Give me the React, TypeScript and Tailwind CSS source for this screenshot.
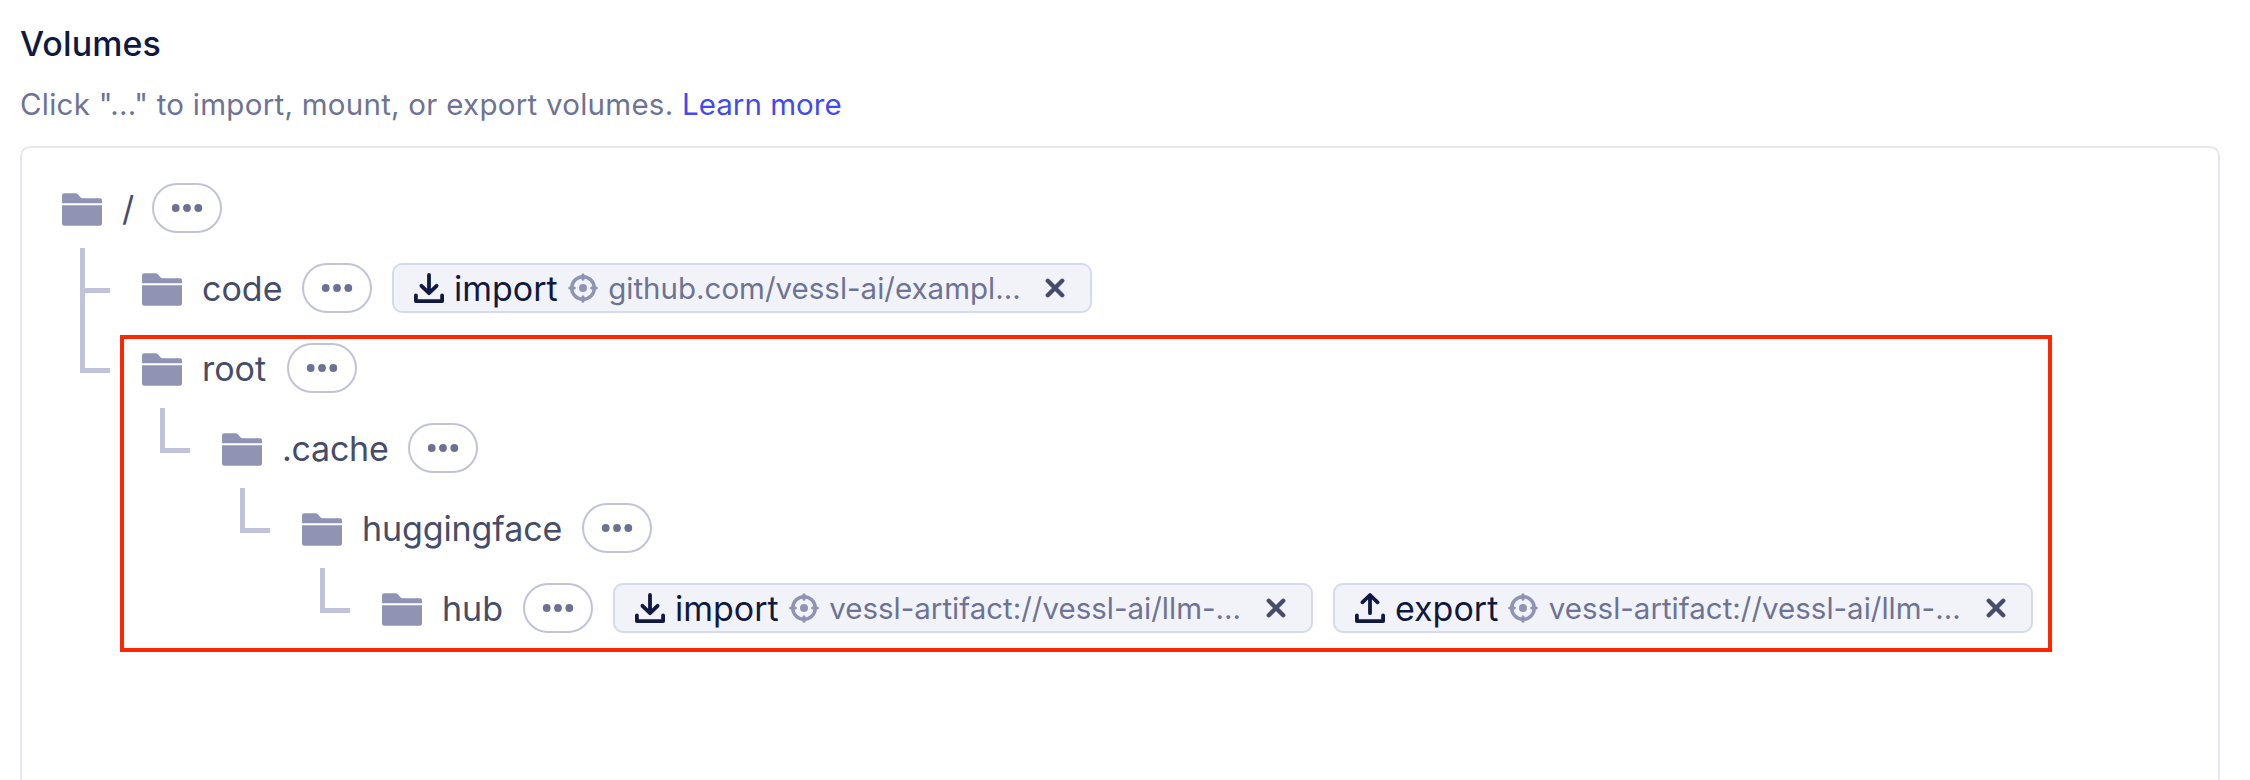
import type { ReactNode } from "react";

function FolderIcon() {
  return (
    <svg width="40" height="34" viewBox="0 0 40 34" fill="#9093b3" className="mt-[3px] shrink-0">
      <path d="M0 10.2V2.5A2.3 2.3 0 0 1 2.3.2H13.4Q14.7.2 15.6 1.1L18.2 4Q19.3 5.2 20.6 5.2H37.8A2.2 2.2 0 0 1 40 7.4V10.2Z" />
      <path d="M0 12.3H40V30.5A2.3 2.3 0 0 1 37.7 32.8H2.3A2.3 2.3 0 0 1 0 30.5Z" />
    </svg>
  );
}

function ImportIcon() {
  return (
    <svg width="30" height="30" viewBox="0 0 30 30" fill="none" stroke="#0f1942" strokeWidth="3.8" strokeLinecap="round" strokeLinejoin="round" className="shrink-0">
      <path d="M15 2V19M7.4 12.8L15 20.2L22.6 12.8" />
      <path d="M1.9 22.4V28.1H28.1V22.4" />
    </svg>
  );
}

function ExportIcon() {
  return (
    <svg width="30" height="30" viewBox="0 0 30 30" fill="none" stroke="#0f1942" strokeWidth="3.8" strokeLinecap="round" strokeLinejoin="round" className="shrink-0">
      <path d="M15 20.2V3M7.4 9.3L15 2L22.6 9.3" />
      <path d="M1.9 22.4V28.1H28.1V22.4" />
    </svg>
  );
}

function TargetIcon() {
  return (
    <svg width="30" height="30" viewBox="0 0 30 30" fill="none" stroke="#9093b3" strokeLinecap="round" className="shrink-0">
      <circle cx="15" cy="15" r="11.3" strokeWidth="3.4" />
      <circle cx="15" cy="15" r="4" fill="#9093b3" stroke="none" />
      <path strokeWidth="3" d="M15 1.7V6.3M15 23.7V28.3M1.7 15H6.3M23.7 15H28.3" />
    </svg>
  );
}

function MoreButton() {
  return (
    <button aria-label="More" className="ml-5 flex h-[50px] w-[70px] shrink-0 items-center justify-center rounded-full border-2 border-[#c0c3d9]">
      <svg width="32" height="8" viewBox="0 0 32 8" fill="#6d7193">
        <circle cx="4.7" cy="4" r="3.9" />
        <circle cx="16" cy="4" r="3.9" />
        <circle cx="27.3" cy="4" r="3.9" />
      </svg>
    </button>
  );
}

function Chip({ kind, url }: { kind: "import" | "export"; url: string }) {
  return (
    <div className="ml-5 flex h-[50px] w-[700px] shrink-0 items-center rounded-[10px] border-2 border-[#d6daed] bg-[#f2f3f9] pl-5 whitespace-nowrap">
      {kind === "import" ? <ImportIcon /> : <ExportIcon />}
      <span className="mt-0.5 ml-2.5 text-[34px] leading-[44px] text-[#0f1942]">{kind}</span>
      <span className="ml-2.5 flex">
        <TargetIcon />
      </span>
      <span className="mb-px ml-[10.5px] text-[29.5px] leading-[44px] text-[#6d7394]">{url}</span>
      <button aria-label="Remove" className="mr-[25px] ml-auto">
        <svg width="20" height="20" viewBox="0 0 20 20" stroke="#464c69" strokeWidth="4.4" strokeLinecap="round" className="block">
          <path d="M2.8 2.8L17.2 17.2M17.2 2.8L2.8 17.2" />
        </svg>
      </button>
    </div>
  );
}

function Branch({ last = true }: { last?: boolean }) {
  return (
    <div className="flex w-[30px] shrink-0 flex-col self-stretch">
      <div className={last ? "h-[45px] border-b-[5px] border-l-[5px] border-[#c0c3d9]" : "flex flex-1 border-l-[5px] border-[#c0c3d9]"}>
        {!last && <div className="mt-10 h-[5px] w-full bg-[#c0c3d9]" />}
      </div>
    </div>
  );
}

type NodeProps = { name: string; labelClass: string; chips?: ReactNode; children?: ReactNode };

function TreeNode({ name, labelClass, chips, children }: NodeProps) {
  return (
    <div className="flex flex-col">
      <div className="flex h-20 items-center">
        <FolderIcon />
        <span className={`mt-0.5 ml-5 text-[34px] leading-[50px] whitespace-nowrap text-[#464d6b] ${labelClass}`}>{name}</span>
        <MoreButton />
        {chips}
      </div>
      {children && <div className="ml-[18px] flex flex-col">{children}</div>}
    </div>
  );
}

function Child({ last = true, children }: { last?: boolean; children: ReactNode }) {
  return (
    <div className="flex gap-8">
      <Branch last={last} />
      {children}
    </div>
  );
}

export default function App() {
  return (
    <div className="relative flex h-[780px] w-[2250px] flex-col overflow-hidden bg-white px-5 pt-5 font-['Inter',sans-serif]">
      <h2 className="text-[34px] leading-[48px] font-medium tracking-[0.1px] text-[#0f1942]">Volumes</h2>
      <p className="mt-[15px] text-[29.5px] leading-[42px] tracking-[0.26px] text-[#6d7394]">
        Click "..." to import, mount, or export volumes.{" "}
        <a href="#" className="tracking-[0.03px] text-[#3f4bef]">Learn more</a>
      </p>
      <div className="mt-[21px] h-[800px] w-[2200px] shrink-0 rounded-[10px] border-2 border-[#e4e7f0] pt-5 pl-10">
        <TreeNode name="/" labelClass="w-[10px]">
          <Child last={false}>
            <TreeNode name="code" labelClass="w-[80px]" chips={<Chip kind="import" url="github.com/vessl-ai/exampl…" />} />
          </Child>
          <Child>
            <TreeNode name="root" labelClass="w-[65px]">
              <Child>
                <TreeNode name=".cache" labelClass="w-[106px] tracking-[-0.25px]">
                  <Child>
                    <TreeNode name="huggingface" labelClass="w-[200px] tracking-[-0.12px]">
                      <Child>
                        <TreeNode
                          name="hub"
                          labelClass="w-[61px]"
                          chips={
                            <>
                              <Chip kind="import" url="vessl-artifact://vessl-ai/llm-…" />
                              <Chip kind="export" url="vessl-artifact://vessl-ai/llm-…" />
                            </>
                          }
                        />
                      </Child>
                    </TreeNode>
                  </Child>
                </TreeNode>
              </Child>
            </TreeNode>
          </Child>
        </TreeNode>
      </div>
      <div className="pointer-events-none absolute top-[335px] left-[120px] h-[317px] w-[1932px] border-4 border-[#ff2600]" />
    </div>
  );
}
